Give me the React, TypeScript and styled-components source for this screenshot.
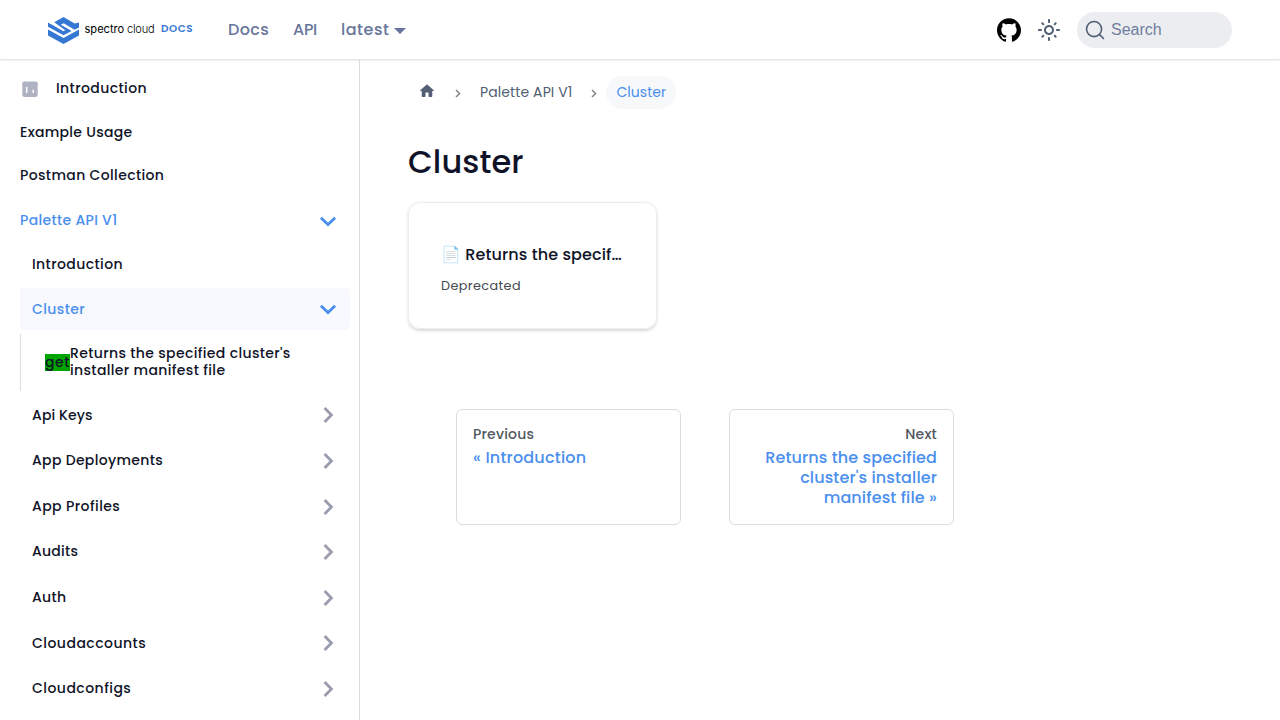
import React from "react";
import styled, { createGlobalStyle } from "styled-components";

const blue = "#4a8fee";
const ink = "#0f1328";

const GlobalStyle = createGlobalStyle`
  * { box-sizing: border-box; }
  body {
    margin: 0;
    height: 720px;
    overflow: hidden;
    background: #fff;
    color: ${ink};
    font-family: Poppins, Inter, sans-serif;
  }
`;

const Page = styled.div`
  height: 720px;
  display: flex;
  flex-direction: column;
`;

const Navbar = styled.header`
  position: relative;
  z-index: 1;
  flex: none;
  height: 59px;
  margin-bottom: 1px;
  padding: 1px 48px 0;
  display: flex;
  align-items: center;
  background: #fff;
  box-shadow: 0 1px 2px 0 rgba(0, 0, 0, 0.15);
`;

const Brand = styled.div`
  display: flex;
  align-items: center;
  width: 180px;
`;

const BrandName = styled.span<{ $light?: boolean }>`
  margin-left: ${(p) => (p.$light ? 2.8 : 5.5)}px;
  margin-top: -3px;
  font: ${(p) => (p.$light ? 300 : 400)} 11.1px Inter, sans-serif;
  letter-spacing: ${(p) => (p.$light ? -0.25 : 0)}px;
  color: #000;
`;

const BrandTag = styled.span`
  margin-left: 6.5px;
  margin-top: -2px;
  font-size: 10.4px;
  font-weight: 600;
  letter-spacing: 0.6px;
  color: #3578d3;
`;

const NavLinks = styled.nav`
  flex: 1;
  display: flex;
  gap: 24px;
`;

const NavLink = styled.a<{ $track: number }>`
  display: flex;
  align-items: center;
  font-size: 16px;
  font-weight: 500;
  line-height: 24px;
  letter-spacing: ${(p) => p.$track}px;
  color: #68759a;
`;

const Caret = styled.span`
  margin: 1px 0 0 4.6px;
  border: 6.4px solid transparent;
  border-top-color: #68759a;
  border-bottom: 0;
`;

const NavTools = styled.div`
  display: flex;
  align-items: center;
  gap: 16px;
`;

const SearchButton = styled.button`
  width: 155px;
  height: 36px;
  padding: 0 8px;
  display: flex;
  align-items: center;
  gap: 6px;
  border: 0;
  border-radius: 40px;
  background: #ebedf0;
  color: #717d9f;
  font: 400 16px "Liberation Sans", Arial, sans-serif;
`;

const Columns = styled.div`
  flex: 1;
  min-height: 0;
  display: flex;
`;

const Sidebar = styled.aside`
  width: 360px;
  padding: 4.4px 9.5px 0 20px;
  border-right: 1px solid #dadde1;
  overflow: hidden;
`;

const Menu = styled.ul`
  margin: 0;
  padding: 0;
  list-style: none;
`;

const MenuItem = styled.li<{
  $indent?: boolean;
  $category?: boolean;
  $active?: boolean;
  $highlight?: boolean;
  $track?: number;
}>`
  height: ${(p) => (p.$category ? 41.6 : 39.5)}px;
  margin-top: 4px;
  padding: 0 9.5px 0 ${(p) => (p.$indent ? 12 : 0)}px;
  display: flex;
  align-items: center;
  justify-content: space-between;
  border-radius: 4px;
  background: ${(p) => (p.$highlight ? "#f8f9ff" : "transparent")};
  color: ${(p) => (p.$active ? blue : ink)};
  font-size: 14px;
  font-weight: 500;
  line-height: 17.5px;
  letter-spacing: ${(p) => p.$track ?? 0.4}px;

  &:nth-child(-n + 6) {
    padding-top: 2px;
  }

  & > svg {
    margin-top: ${(p) => (p.$highlight ? -2 : 0)}px;
  }
`;

const MenuLabel = styled.span`
  display: flex;
  align-items: center;
  gap: 16px;
`;

const Endpoint = styled.li`
  height: 57px;
  margin-top: 4px;
  padding-left: 24px;
  display: flex;
  align-items: center;
  border-left: 1px solid #dadde1;
  font-size: 14px;
  font-weight: 500;
  line-height: 17.5px;
  letter-spacing: 0.36px;
`;

const Method = styled.span`
  width: 25px;
  background: #00a400;
  line-height: 17px;
  letter-spacing: 0.5px;
`;

const EndpointName = styled.span`
  width: 250px;
`;

const Main = styled.main`
  flex: 1;
  padding: 16px 48px;
`;

const Breadcrumbs = styled.nav`
  height: 33px;
  display: flex;
  align-items: center;
`;

const Crumb = styled.span<{ $active?: boolean }>`
  height: 33px;
  padding: 0 10px;
  display: flex;
  align-items: center;
  border-radius: 33px;
  background: ${(p) => (p.$active ? "#f7f8fa" : "transparent")};
  color: ${(p) => (p.$active ? blue : "#525f74")};
  font-size: 14px;
  letter-spacing: ${(p) => (p.$active ? 0.06 : 0.1)}px;

  & > svg {
    margin-top: -4px;
  }
`;

const CrumbArrow = styled.svg`
  margin: 1px 9px 0;
`;

const Title = styled.h1`
  margin: 33px 0 20px;
  font-size: 32px;
  font-weight: 500;
  line-height: 40px;
  letter-spacing: 0.1px;
`;

const DocCard = styled.article`
  width: 249px;
  height: 127px;
  padding: 40px 32px 0;
  border: 1px solid #ebedf0;
  border-radius: 12px;
  box-shadow: 0 1.5px 3px 0 rgba(0, 0, 0, 0.15);
`;

const CardTitle = styled.h2`
  margin: 0 0 11px;
  overflow: hidden;
  white-space: nowrap;
  text-overflow: ellipsis;
  font-size: 16px;
  font-weight: 500;
  line-height: 24px;
  letter-spacing: 0.1px;
`;

const CardText = styled.p`
  margin: 0;
  font-size: 12.8px;
  line-height: 16px;
  letter-spacing: 0.4px;
  color: #444950;
`;

const Pagination = styled.nav`
  margin: 80px 0 0 48px;
  display: flex;
  gap: 48px;
`;

const PageLink = styled.a<{ $next?: boolean }>`
  width: 225px;
  height: 116px;
  padding: 16px;
  border: 1px solid #dadde1;
  border-radius: 6px;
  text-align: ${(p) => (p.$next ? "right" : "left")};
  font-weight: 500;
`;

const PageDirection = styled.div`
  margin-bottom: 4px;
  font-size: 14px;
  line-height: 17.5px;
  letter-spacing: 0.2px;
  color: #525860;
`;

const PageTitle = styled.div<{ $track: number }>`
  font-size: 16px;
  line-height: 20px;
  letter-spacing: ${(p) => p.$track}px;
  color: ${blue};
`;

const LogoMark = () => (
  <svg width="31" height="27" viewBox="0 0 31 27">
    <path
      fill="#3578d3"
      d="M15.5 0 26.6 6.4 31 5.4V10.4L26.6 12.8 15.7 6.2 12.8 7.8 23.6 13.9 15.5 18.3 0 9.7V5.6L15.5 14.2 17.3 13.3 6.2 5.2z"
    />
    <path fill="#3578d3" d="M0 12.4 15.5 21 31 12.5V18.6L15.5 27 0 18.6z" />
  </svg>
);

const ChartIcon = () => (
  <svg width="20" height="20" viewBox="0 0 20 20">
    <rect x="2.3" y="2.5" width="15.4" height="15.4" rx="1.8" fill="#afb2c2" />
    <path d="M6.7 8v6M13.2 10.7V14" stroke="#fff" strokeWidth="1.5" />
  </svg>
);

const GithubIcon = () => (
  <svg width="24" height="24" viewBox="0 0 24 24">
    <path d="M12 .297c-6.63 0-12 5.373-12 12 0 5.303 3.438 9.8 8.205 11.385.6.113.82-.258.82-.577 0-.285-.01-1.04-.015-2.04-3.338.724-4.042-1.61-4.042-1.61C4.422 18.07 3.633 17.7 3.633 17.7c-1.087-.744.084-.729.084-.729 1.205.084 1.838 1.236 1.838 1.236 1.07 1.835 2.809 1.305 3.495.998.108-.776.417-1.305.76-1.605-2.665-.3-5.466-1.332-5.466-5.93 0-1.31.465-2.38 1.235-3.22-.135-.303-.54-1.523.105-3.176 0 0 1.005-.322 3.3 1.23.96-.267 1.98-.399 3-.405 1.02.006 2.04.138 3 .405 2.28-1.552 3.285-1.23 3.285-1.23.645 1.653.24 2.873.12 3.176.765.84 1.23 1.91 1.23 3.22 0 4.61-2.805 5.625-5.475 5.92.42.36.81 1.096.81 2.22 0 1.606-.015 2.896-.015 3.286 0 .315.21.69.825.57C20.565 22.092 24 17.592 24 12.297c0-6.627-5.373-12-12-12" />
  </svg>
);

const SunIcon = () => (
  <svg width="24" height="24" viewBox="0 0 24 24">
    <path
      fill="#525f74"
      d="M12,9c1.65,0,3,1.35,3,3s-1.35,3-3,3s-3-1.35-3-3S10.35,9,12,9 M12,7c-2.76,0-5,2.24-5,5s2.24,5,5,5s5-2.24,5-5 S14.76,7,12,7L12,7z M2,13l2,0c0.55,0,1-0.45,1-1s-0.45-1-1-1l-2,0c-0.55,0-1,0.45-1,1S1.45,13,2,13z M20,13l2,0c0.55,0,1-0.45,1-1 s-0.45-1-1-1l-2,0c-0.55,0-1,0.45-1,1S19.45,13,20,13z M11,2v2c0,0.55,0.45,1,1,1s1-0.45,1-1V2c0-0.55-0.45-1-1-1S11,1.45,11,2z M11,20v2c0,0.55,0.45,1,1,1s1-0.45,1-1v-2c0-0.55-0.45-1-1-1C11.45,19,11,19.45,11,20z M5.99,4.58c-0.39-0.39-1.03-0.39-1.41,0 c-0.39,0.39-0.39,1.03,0,1.41l1.06,1.06c0.39,0.39,1.03,0.39,1.41,0s0.39-1.03,0-1.41L5.99,4.58z M18.36,16.95 c-0.39-0.39-1.03-0.39-1.41,0c-0.39,0.39-0.39,1.03,0,1.41l1.06,1.06c0.39,0.39,1.03,0.39,1.41,0c0.39-0.39,0.39-1.03,0-1.41 L18.36,16.95z M19.42,5.99c0.39-0.39,0.39-1.03,0-1.41c-0.39-0.39-1.03-0.39-1.41,0l-1.06,1.06c-0.39,0.39-0.39,1.03,0,1.41 s1.03,0.39,1.41,0L19.42,5.99z M7.05,18.36c0.39-0.39,0.39-1.03,0-1.41c-0.39-0.39-1.03-0.39-1.41,0l-1.06,1.06 c-0.39,0.39-0.39,1.03,0,1.41s1.03,0.39,1.41,0L7.05,18.36z"
    />
  </svg>
);

const SearchIcon = () => (
  <svg width="20" height="20" viewBox="0 0 20 20">
    <path
      d="M14.386 14.386l4.0877 4.0877-4.0877-4.0877c-2.9418 2.9419-7.7115 2.9419-10.6533 0-2.9419-2.9418-2.9419-7.7115 0-10.6533 2.9418-2.9419 7.7115-2.9419 10.6533 0 2.9419 2.9418 2.9419 7.7115 0 10.6533z"
      stroke="#525f74"
      strokeWidth="1.6"
      fill="none"
      strokeLinecap="round"
      strokeLinejoin="round"
    />
  </svg>
);

const HomeIcon = () => (
  <svg width="18" height="18" viewBox="0 0 24 24">
    <path
      d="M10 19v-5h4v5c0 .55.45 1 1 1h3c.55 0 1-.45 1-1v-7h1.7c.46 0 .68-.57.33-.87L12.67 3.6c-.38-.34-.96-.34-1.34 0l-8.36 7.53c-.34.3-.13.87.33.87H5v7c0 .55.45 1 1 1h3c.55 0 1-.45 1-1z"
      fill="#525f74"
    />
  </svg>
);

const Chevron = ({ open }: { open?: boolean }) => (
  <svg width="24" height="24" viewBox="0 0 24 24">
    <path
      d={open ? "M4.9 8.8 12 15.6l7.1-6.8" : "M8.6 5 15.4 12l-6.8 7"}
      fill="none"
      stroke={open ? blue : "#9a9cb0"}
      strokeWidth="2.8"
    />
  </svg>
);

const Separator = () => (
  <CrumbArrow width="6" height="9" viewBox="0 0 6 9">
    <path d="M1 .9 4.6 4.5 1 8.1" fill="none" stroke="#7f7f7f" strokeWidth="1.4" />
  </CrumbArrow>
);

const categories = [
  { name: "Api Keys", track: 0.12 },
  { name: "App Deployments", track: 0.32 },
  { name: "App Profiles", track: 0.42 },
  { name: "Audits", track: 0.25 },
  { name: "Auth", track: 0.3 },
  { name: "Cloudaccounts", track: 0.47 },
  { name: "Cloudconfigs", track: 0.46 },
];

export default function App() {
  return (
    <Page>
      <GlobalStyle />
      <Navbar>
        <Brand>
          <LogoMark />
          <BrandName>spectro</BrandName>
          <BrandName $light>cloud</BrandName>
          <BrandTag>DOCS</BrandTag>
        </Brand>
        <NavLinks>
          <NavLink $track={0.33}>Docs</NavLink>
          <NavLink $track={-0.3}>API</NavLink>
          <NavLink $track={0.5}>
            latest
            <Caret />
          </NavLink>
        </NavLinks>
        <NavTools>
          <GithubIcon />
          <SunIcon />
          <SearchButton>
            <SearchIcon />
            Search
          </SearchButton>
        </NavTools>
      </Navbar>
      <Columns>
        <Sidebar>
          <Menu>
            <MenuItem>
              <MenuLabel>
                <ChartIcon />
                Introduction
              </MenuLabel>
            </MenuItem>
            <MenuItem $track={0.3}>Example Usage</MenuItem>
            <MenuItem $track={0.36}>Postman Collection</MenuItem>
            <MenuItem $category $active $track={0.32}>
              Palette API V1
              <Chevron open />
            </MenuItem>
            <MenuItem $indent>Introduction</MenuItem>
            <MenuItem $indent $category $active $highlight>
              Cluster
              <Chevron open />
            </MenuItem>
            <Endpoint>
              <Method>get</Method>
              <EndpointName>Returns the specified cluster's installer manifest file</EndpointName>
            </Endpoint>
            {categories.map(({ name, track }) => (
              <MenuItem key={name} $indent $category $track={track}>
                {name}
                <Chevron />
              </MenuItem>
            ))}
          </Menu>
        </Sidebar>
        <Main>
          <Breadcrumbs>
            <Crumb>
              <HomeIcon />
            </Crumb>
            <Separator />
            <Crumb>Palette API V1</Crumb>
            <Separator />
            <Crumb $active>Cluster</Crumb>
          </Breadcrumbs>
          <Title>Cluster</Title>
          <DocCard>
            <CardTitle>📄️ Returns the specified cluster's installer manifest file</CardTitle>
            <CardText>Deprecated</CardText>
          </DocCard>
          <Pagination>
            <PageLink>
              <PageDirection>Previous</PageDirection>
              <PageTitle $track={0.2}>« Introduction</PageTitle>
            </PageLink>
            <PageLink $next>
              <PageDirection>Next</PageDirection>
              <PageTitle $track={0.12}>Returns the specified cluster's installer manifest file »</PageTitle>
            </PageLink>
          </Pagination>
        </Main>
      </Columns>
    </Page>
  );
}
